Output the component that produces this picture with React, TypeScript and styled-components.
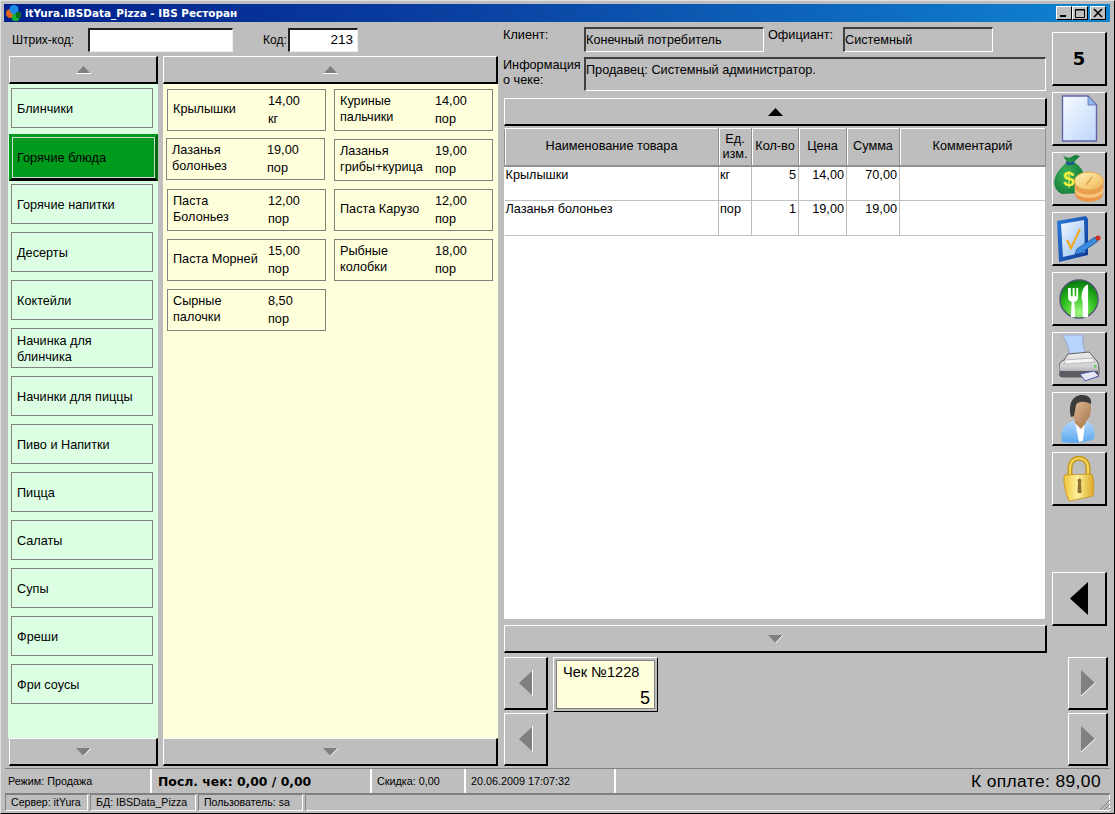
import React from "react";
import styled, { createGlobalStyle, css } from "styled-components";

const FACE = "#bebebe";

const Global = createGlobalStyle`
  html, body { margin: 0; padding: 0; background: ${FACE}; }
  body { font-family: "Liberation Sans", Arial, sans-serif; font-size: 12.7px; color: #000; }
  * { box-sizing: border-box; }
`;

const raised = css`
  border-style: solid;
  border-width: 1px 2px 2px 1px;
  border-color: #fff #000 #000 #fff;
  background: ${FACE};
`;
const sunken = css`
  border-style: solid;
  border-width: 2px 1px 1px 2px;
  border-color: #404040 #fff #fff #404040;
`;

const Window = styled.div`
  width: 1115px;
  height: 814px;
  background: ${FACE};
  display: flex;
  flex-direction: column;
  padding: 4px 2px 2px 4px;
  border: 1px solid;
  border-color: #e0e0e0 #000 #000 #e0e0e0;
  overflow: hidden;
`;
const TitleBar = styled.div`
  height: 18px;
  margin: -1px 2px 0 -1px;
  flex: none;
  display: flex;
  align-items: center;
  padding: 0 4px 0 2px;
  background: linear-gradient(90deg, #00208c 0%, #0a3fa0 40%, #1084d0 100%);
`;
const TitleText = styled.span`
  font-family: "DejaVu Sans", sans-serif;
  font-weight: 700;
  font-size: 10.45px;
  color: #fff;
  margin-left: 3px;
  flex: 1;
  white-space: nowrap;
`;
const WinButton = styled.div<{ $gap?: number }>`
  width: 16px;
  height: 14px;
  margin-left: ${(p) => p.$gap ?? 0}px;
  background: ${FACE};
  border: 1px solid;
  border-color: #fff #000 #000 #fff;
  display: flex;
  align-items: center;
  justify-content: center;
`;
const Main = styled.div`
  flex: 1;
  display: flex;
  min-height: 0;
`;
const LeftSide = styled.div`
  width: 490px;
  margin-left: 3px;
  display: flex;
  flex-direction: column;
`;
const TopRow = styled.div`
  height: 34px;
  display: flex;
  align-items: flex-start;
  padding-top: 6px;
`;
const BarLabel = styled.label<{ $w: number; $ml?: number }>`
  width: ${(p) => p.$w}px;
  margin-left: ${(p) => p.$ml ?? 0}px;
  font-size: 12px;
  line-height: 24px;
  flex: none;
`;
const Input = styled.div<{ $w: number }>`
  width: ${(p) => p.$w}px;
  height: 24px;
  flex: none;
  background: #fff;
  ${sunken}
  border-color: #202020 #eee #eee #202020;
  font-size: 13.5px;
  line-height: 19px;
  text-align: right;
  padding-right: 4px;
`;
const Panes = styled.div`
  flex: 1;
  display: flex;
  gap: 5px;
  min-height: 0;
`;
const Pane = styled.div<{ $w: number }>`
  width: ${(p) => p.$w}px;
  display: flex;
  flex-direction: column;
  margin-left: ${(p) => (p.$w < 200 ? 1 : 0)}px;
`;
const ScrollBtn = styled.div<{ $ml?: number }>`
  ${raised}
  height: 28px;
  margin-left: ${(p) => p.$ml ?? 0}px;
  flex: none;
  display: flex;
  align-items: center;
  justify-content: center;
`;
const CatList = styled.div`
  flex: 1;
  background: #dcffe4;
  margin-left: -1px;
  padding: 4px 0 0 3px;
  display: flex;
  flex-direction: column;
  gap: 8px;
`;
const Cat = styled.div<{ $on?: boolean }>`
  width: 142px;
  height: 40px;
  flex: none;
  border: 1px solid #808080;
  background: #dcffe4;
  display: flex;
  align-items: center;
  padding: 1px 0 0 5px;
  line-height: 16px;
  ${(p) =>
    p.$on &&
    css`
      width: 149px;
      height: 47px;
      margin: -2px 0 -5px -2px;
      background: #009b1c;
      border: 3px solid #009b1c;
      border-right-color: #006a10;
      border-bottom-color: #000;
      outline: 1px solid #d8d8d8;
      outline-offset: -4px;
      padding-left: 5px;
    `}
`;
const ProductPanel = styled.div`
  flex: 1;
  background: #ffffdc;
  padding: 5px 0 0 4px;
  display: grid;
  grid-template-columns: 159px 159px;
  grid-auto-rows: 42px;
  column-gap: 8px;
  row-gap: 8px;
  align-content: start;
`;
const Product = styled.div<{ $nudge?: boolean }>`
  border: 1px solid #808080;
  background: #ffffdc;
  display: grid;
  grid-template-columns: 95px 1fr;
  padding-left: 5px;
  ${(p) => p.$nudge && css`transform: translate(-1px, -1px);`}
`;
const ProductName = styled.div`
  align-self: center;
  line-height: 16px;
  margin-top: -2px;
`;
const ProductPrice = styled.div`
  line-height: 18px;
  padding-top: 2px;
`;
const Center = styled.div`
  width: 544px;
  margin-left: 5px;
  display: flex;
  flex-direction: column;
`;
const InfoLabel = styled.div<{ $w?: number; $ml?: number }>`
  width: ${(p) => p.$w ?? 81}px;
  margin-left: ${(p) => p.$ml ?? 0}px;
  line-height: 15px;
  padding-top: 1px;
  flex: none;
`;
const InfoRow = styled.div<{ $h: number; $pt: number }>`
  display: flex;
  height: ${(p) => p.$h}px;
  padding-top: ${(p) => p.$pt}px;
  flex: none;
`;
const InfoField = styled.div<{ $w: number; $h?: number }>`
  width: ${(p) => p.$w}px;
  height: ${(p) => p.$h ?? 25}px;
  ${sunken}
  flex: none;
  padding: 2px 0 0 0;
  line-height: 18px;
`;
const TableWrap = styled.div`
  width: 541px;
  height: 491px;
  margin: 2px 0 6px 1px;
  background: #fff;
  flex: none;
`;
const Table = styled.table`
  border-collapse: collapse;
  table-layout: fixed;
  width: 541px;
  font-size: 12.7px;
`;
const Th = styled.th`
  background: ${FACE};
  font-weight: 400;
  height: 37px;
  line-height: 15px;
  padding: 0;
  border: 1px solid #909090;
  border-top-color: #fff;
  border-bottom: 2px solid #909090;
  box-shadow: inset 1px 0 #fff;
`;
const Td = styled.td<{ $right?: boolean }>`
  height: 35px;
  vertical-align: top;
  padding: 0 2px 0 1px;
  border-right: 1px solid #bdbdbd;
  border-bottom: 1px solid #c0c0c0;
  text-align: ${(p) => (p.$right ? "right" : "left")};
  line-height: 16px;
`;
const ChecksRow = styled.div`
  display: flex;
  margin: 4px 0 0 1px;
  flex: 1;
`;
const NavColumn = styled.div<{ $w: number; $ml?: number }>`
  display: flex;
  flex-direction: column;
  gap: 3px;
  width: ${(p) => p.$w}px;
  margin-left: ${(p) => p.$ml ?? 0}px;
  flex: none;
`;
const NavBtn = styled.div`
  ${raised}
  height: 53px;
  display: flex;
  align-items: center;
  justify-content: center;
`;
const CheckCard = styled.div`
  width: 105px;
  height: 55px;
  margin-left: 5px;
  border: 1px solid;
  border-color: #fff #000 #000 #fff;
  background: ${FACE};
  padding: 2px;
`;
const CheckInner = styled.div`
  height: 100%;
  background: #ffffdc;
  border: 1px solid #808080;
  padding: 3px 4px 0 6px;
  font-size: 14.6px;
  display: flex;
  flex-direction: column;
  justify-content: space-between;
`;
const CheckCount = styled.div`
  text-align: right;
  font-size: 18px;
  line-height: 20px;
`;
const Right = styled.div`
  width: 55px;
  margin-left: 5px;
  padding-top: 10px;
  display: flex;
  flex-direction: column;
  gap: 6px;
`;
const ToolBtn = styled.div`
  ${raised}
  width: 55px;
  height: 54px;
  flex: none;
  display: flex;
  align-items: center;
  justify-content: center;
`;
const CountBtn = styled(ToolBtn)`
  font-weight: 700;
  font-size: 18px;
  font-family: "DejaVu Sans", sans-serif;
`;
const Spacer = styled.div<{ $h: number }>`
  height: ${(p) => p.$h}px;
  flex: none;
`;
const Status = styled.div<{ $h: number; $mt?: number }>`
  display: flex;
  height: ${(p) => p.$h}px;
  margin-top: ${(p) => p.$mt ?? 0}px;
  margin-right: 2px;
  gap: 2px;
  flex: none;
  position: relative;
  border-top: 1px solid #808080;
`;
const Cell = styled.div<{ $w?: number; $bold?: boolean; $big?: boolean }>`
  ${(p) => (p.$w ? `width:${p.$w}px;flex:none;` : "flex:1;")}
  border-right: 2px solid #fff;
  display: flex;
  align-items: center;
  padding-left: 3px;
  font-size: 10.8px;
  white-space: nowrap;
  ${(p) => p.$bold && css`font-weight: 700; font-size: 12.4px; padding-left: 4px; font-family: "DejaVu Sans", sans-serif;`}
  ${(p) => p.$big && css`border-right: 0; justify-content: flex-end; padding-right: 9px; font-size: 17.4px; letter-spacing: 0.4px;`}
`;
const BoxCell = styled.div<{ $w?: number }>`
  ${(p) => (p.$w ? `width:${p.$w}px;flex:none;` : "flex:1;")}
  border: 1px solid;
  border-color: #808080 #fff #fff #808080;
  font-size: 10.6px;
  line-height: 15px;
  padding-left: 5px;
  white-space: nowrap;
`;
const Grip = styled.svg`
  position: absolute;
  right: -1px;
  bottom: 0;
`;
const BlockSvg = styled.svg`
  display: block;
`;

type Dir = "up" | "down" | "left" | "right";
const Arrow = ({ dir, color = "#808080", size = 15, hi = true }: { dir: Dir; color?: string; size?: number; hi?: boolean }) => {
  const h = Math.round(size * 0.55);
  if (dir === "up" || dir === "down") {
    const pts = dir === "up" ? `0,${h} ${size / 2},0 ${size},${h}` : `0,0 ${size},0 ${size / 2},${h}`;
    return (
      <BlockSvg width={size} height={h}>
        <polygon points={pts} fill={color} />
        {hi && (dir === "up"
          ? <line x1="0" y1={h - 0.5} x2={size} y2={h - 0.5} stroke="#fff" />
          : <line x1={size} y1="0" x2={size / 2} y2={h} stroke="#fff" />)}
      </BlockSvg>
    );
  }
  const pts = dir === "left" ? `${h},0 ${h},${size} 0,${size / 2}` : `0,0 ${h},${size / 2} 0,${size}`;
  return (
    <BlockSvg width={h} height={size}>
      <polygon points={pts} fill={color} />
      {hi && (dir === "left"
        ? <line x1={h - 0.5} y1="0" x2={h - 0.5} y2={size} stroke="#fff" />
        : <line x1={h} y1={size / 2} x2="0" y2={size} stroke="#fff" />)}
    </BlockSvg>
  );
};

const AppLogo = () => (
  <svg width="16" height="16" viewBox="0 0 16 16">
    <circle cx="4.5" cy="8.5" r="4.5" fill="#e8641c" />
    <rect x="6" y="9" width="7" height="7" rx="2" fill="#18b030" />
    <circle cx="8" cy="4.5" r="4.5" fill="#1c8ce8" />
    <rect x="10" y="7" width="5" height="6" rx="1" fill="#0c7020" />
  </svg>
);

const DocIcon = () => (
  <svg width="37" height="47" viewBox="0 0 37 47">
    <defs>
      <linearGradient id="doc" x1="0" y1="0" x2="1" y2="1">
        <stop offset="0" stopColor="#f8fbff" />
        <stop offset="1" stopColor="#bcd6fc" />
      </linearGradient>
    </defs>
    <path d="M1.5 1 H27 L35.5 10 V46 H1.5 Z" fill="url(#doc)" stroke="#6464ac" strokeWidth="1.4" />
    <path d="M27 1 V10 H35.5 Z" fill="#8cb8f0" stroke="#6464ac" strokeWidth="0.8" />
  </svg>
);

const MoneyIcon = () => (
  <svg width="50" height="48" viewBox="0 0 50 48">
    <defs>
      <radialGradient id="bag" cx="0.4" cy="0.5" r="0.7">
        <stop offset="0" stopColor="#3cb45c" />
        <stop offset="1" stopColor="#0c7030" />
      </radialGradient>
      <linearGradient id="coin" x1="0" y1="0" x2="1" y2="1">
        <stop offset="0" stopColor="#fff4b8" />
        <stop offset="1" stopColor="#f0b454" />
      </linearGradient>
    </defs>
    <path d="M9 1 L15 3 L21 0 L26 1 L20 7 C26 11 30 16 31 24 L26 38 L8 39 C1 36 -1 29 1 23 C3 16 9 11 13 7 Z" fill="url(#bag)" />
    <path d="M12 6 Q16 9 20 6 L20 9 Q16 11 12 9 Z" fill="#2050a0" />
    <text x="9" y="31" fontFamily="Liberation Sans" fontWeight="700" fontSize="21" fill="#f4f040">$</text>
    <ellipse cx="35" cy="39" rx="14" ry="8" fill="#e89848" />
    <ellipse cx="35" cy="35" rx="14.5" ry="8" fill="#f8c47c" />
    <ellipse cx="35" cy="31.5" rx="14.5" ry="8" fill="#e8a050" />
    <ellipse cx="35" cy="26" rx="14.5" ry="9" fill="url(#coin)" stroke="#e8a848" />
    <path d="M32 30 L38 22" stroke="#e0a040" strokeWidth="1.3" />
  </svg>
);

const CheckIcon = () => (
  <svg width="46" height="46" viewBox="0 0 46 46">
    <defs>
      <linearGradient id="pad" x1="0" y1="0" x2="1" y2="1">
        <stop offset="0" stopColor="#2c7ce0" />
        <stop offset="1" stopColor="#0c3890" />
      </linearGradient>
      <linearGradient id="sheet" x1="0" y1="0" x2="1" y2="1">
        <stop offset="0" stopColor="#f4f8ff" />
        <stop offset="1" stopColor="#8cbcf4" />
      </linearGradient>
    </defs>
    <path d="M1 5 L30 0 L32 3 L32 39 L3 46 Z" fill="url(#pad)" />
    <path d="M5 8 L28 4 L29 36 L7 41 Z" fill="url(#sheet)" />
    <path d="M11 24 L15 32 L24 13" fill="none" stroke="#f0a820" strokeWidth="2.1" />
    <path d="M21 33 L39 21 L42 25 L25 37 L19 38 Z" fill="#3c8ce0" stroke="#1850a0" strokeWidth="0.8" />
    <circle cx="42" cy="22" r="2.6" fill="#d03020" />
  </svg>
);

const FoodIcon = () => (
  <svg width="40" height="42" viewBox="0 0 44 46">
    <defs>
      <radialGradient id="ball" cx="0.5" cy="0.85" r="0.8">
        <stop offset="0" stopColor="#a4f880" />
        <stop offset="0.55" stopColor="#30c020" />
        <stop offset="1" stopColor="#0c7c10" />
      </radialGradient>
    </defs>
    <circle cx="22" cy="23" r="21" fill="url(#ball)" stroke="#505078" strokeWidth="1.4" />
    <path d="M10 11 V21 Q10 25 14 26 L13 43 H18 L17 26 Q21 25 21 21 V11 H19 V20 H17.2 V11 H15 V20 H13 V11 Z" fill="#fff" />
    <path d="M26 43 V26 C23 20 26 8 32 7 V43 Z" fill="#fff" />
  </svg>
);

const PrinterIcon = () => (
  <svg width="41" height="47" viewBox="0 0 41 47">
    <defs>
      <linearGradient id="pbody" x1="0" y1="0" x2="0" y2="1">
        <stop offset="0" stopColor="#eeeeee" />
        <stop offset="0.6" stopColor="#d0d0d4" />
        <stop offset="1" stopColor="#84848c" />
      </linearGradient>
    </defs>
    <path d="M3 0 L24 0 C23 8 25 14 27 20 L11 22 C10 14 8 6 3 0 Z" fill="#b8d4fc" stroke="#7890c8" strokeWidth="0.6" />
    <path d="M9 19 L30 17 L38 26 Q40 29 40 34 V39 Q40 42 37 42 H4 Q0 42 0 39 V32 Q0 27 5 25 Z" fill="url(#pbody)" stroke="#606068" strokeWidth="1" />
    <path d="M6 25 L34 23 L36 27 L5 29 Z" fill="#f6f6f6" stroke="#9c9ca0" strokeWidth="0.6" />
    <path d="M1 36 H39 V40 Q39 42 37 42 H4 Q1 42 1 40 Z" fill="#5c5c64" />
    <path d="M21 39 L35 36 L40 41 L26 46 Z" fill="#e6e8f6" stroke="#5058a8" strokeWidth="1" />
    <rect x="35" y="30" width="2.5" height="2.5" fill="#60d050" />
  </svg>
);

const UserIcon = () => (
  <svg width="36" height="48" viewBox="0 0 36 48">
    <defs>
      <linearGradient id="skin" x1="0" y1="0" x2="1" y2="1">
        <stop offset="0" stopColor="#ecc8a4" />
        <stop offset="1" stopColor="#a87850" />
      </linearGradient>
      <linearGradient id="shirt" x1="0" y1="0" x2="0" y2="1">
        <stop offset="0" stopColor="#b0d8fc" />
        <stop offset="1" stopColor="#5ca8f0" />
      </linearGradient>
    </defs>
    <path d="M1 47 C-1 35 3 29 12 26 L24 26 C32 28 35 34 33 44 Q18 50 1 47 Z" fill="url(#shirt)" />
    <path d="M14 27 L24 27 L22 46 L18 47 Z" fill="#fff" />
    <path d="M13 18 H25 V28 L20 34 L14 28 Z" fill="#b88858" />
    <ellipse cx="20" cy="14" rx="10" ry="14" fill="url(#skin)" />
    <path d="M10 22 C7 10 11 0 21 0 C27 0 31 3 30 9 C24 6 17 6 15 10 L13 21 Z" fill="#3c3c3c" />
  </svg>
);

const LockIcon = () => (
  <svg width="32" height="46" viewBox="0 0 32 46">
    <defs>
      <linearGradient id="gold" x1="0" y1="0" x2="1" y2="0">
        <stop offset="0" stopColor="#f0c438" />
        <stop offset="0.45" stopColor="#fff29c" />
        <stop offset="1" stopColor="#dca824" />
      </linearGradient>
    </defs>
    <path d="M7 20 V12 C7 -1 25 -1 25 12 V20" fill="none" stroke="#c89818" strokeWidth="5" />
    <path d="M7 20 V12 C7 -1 25 -1 25 12 V20" fill="none" stroke="#f4d860" strokeWidth="2" />
    <path d="M1 19 L29 18 Q32 26 30 40 L6 45 Q0 32 1 19 Z" fill="url(#gold)" stroke="#c89020" strokeWidth="0.8" />
    <path d="M15 26 a2 2 0 1 1 3 0 L18.5 37 H14.5 Z" fill="#8c7030" />
  </svg>
);

const categories = ["Блинчики", "Горячие блюда", "Горячие напитки", "Десерты", "Коктейли", "Начинка для блинчика", "Начинки для пиццы", "Пиво и Напитки", "Пицца", "Салаты", "Супы", "Фреши", "Фри соусы"];
const products: { n: React.ReactNode; p: string; u: string; nudge?: boolean }[] = [
  { n: "Крылышки", p: "14,00", u: "кг" },
  { n: <>Куриные<br />пальчики</>, p: "14,00", u: "пор" },
  { n: <>Лазанья<br />болоньез</>, p: "19,00", u: "пор", nudge: true },
  { n: <>Лазанья<br />грибы+курица</>, p: "19,00", u: "пор" },
  { n: <>Паста<br />Болоньез</>, p: "12,00", u: "пор" },
  { n: "Паста Карузо", p: "12,00", u: "пор" },
  { n: "Паста Морней", p: "15,00", u: "пор" },
  { n: <>Рыбные<br />колобки</>, p: "18,00", u: "пор" },
  { n: <>Сырные<br />палочки</>, p: "8,50", u: "пор" },
];
const rows = [
  ["Крылышки", "кг", "5", "14,00", "70,00"],
  ["Лазанья болоньез", "пор", "1", "19,00", "19,00"],
];

export default function App() {
  return (
    <Window>
      <Global />
      <TitleBar>
        <AppLogo />
        <TitleText>itYura.IBSData_Pizza - IBS Ресторан</TitleText>
        <WinButton>
          <svg width="10" height="10"><rect x="1" y="7" width="6" height="2" /></svg>
        </WinButton>
        <WinButton>
          <svg width="10" height="10"><path d="M0.5 1.5 H9.5 V9.5 H0.5 Z M0.5 2 H9.5" fill="none" stroke="#000" /></svg>
        </WinButton>
        <WinButton $gap={2}>
          <svg width="10" height="10"><path d="M1 1 L9 9 M9 1 L1 9" stroke="#000" strokeWidth="1.6" /></svg>
        </WinButton>
      </TitleBar>
      <Main>
        <LeftSide>
          <TopRow>
            <BarLabel $w={76} $ml={4}>Штрих-код:</BarLabel>
            <Input $w={145} />
            <BarLabel $w={25} $ml={30}>Код:</BarLabel>
            <Input $w={70}>213</Input>
          </TopRow>
          <Panes>
            <Pane $w={149}>
              <ScrollBtn><Arrow dir="up" /></ScrollBtn>
              <CatList>
                {categories.map((c) => (
                  <Cat key={c} $on={c === "Горячие блюда"}>{c === "Начинка для блинчика" ? <span>Начинка для<br />блинчика</span> : c}</Cat>
                ))}
              </CatList>
              <ScrollBtn><Arrow dir="down" /></ScrollBtn>
            </Pane>
            <Pane $w={335}>
              <ScrollBtn><Arrow dir="up" /></ScrollBtn>
              <ProductPanel>
                {products.map((p, i) => (
                  <Product key={i} $nudge={p.nudge}>
                    <ProductName>{p.n}</ProductName>
                    <ProductPrice>{p.p}<br />{p.u}</ProductPrice>
                  </Product>
                ))}
              </ProductPanel>
              <ScrollBtn><Arrow dir="down" /></ScrollBtn>
            </Pane>
          </Panes>
        </LeftSide>
        <Center>
          <InfoRow $h={30} $pt={5}>
            <InfoLabel>Клиент:</InfoLabel>
            <InfoField $w={180}>Конечный потребитель</InfoField>
            <InfoLabel $w={75} $ml={4}>Официант:</InfoLabel>
            <InfoField $w={150}>Системный</InfoField>
          </InfoRow>
          <InfoRow $h={46} $pt={5}>
            <InfoLabel>Информация<br />о чеке:</InfoLabel>
            <InfoField $w={462} $h={34}>Продавец: Системный администратор.</InfoField>
          </InfoRow>
          <ScrollBtn $ml={1}><Arrow dir="up" color="#000" hi={false} /></ScrollBtn>
          <TableWrap>
            <Table>
              <colgroup>
                <col width={214} /><col width={33} /><col width={47} /><col width={48} /><col width={53} /><col width={146} />
              </colgroup>
              <thead>
                <tr>
                  <Th>Наименование товара</Th>
                  <Th>Ед.<br />изм.</Th>
                  <Th>Кол-во</Th>
                  <Th>Цена</Th>
                  <Th>Сумма</Th>
                  <Th>Комментарий</Th>
                </tr>
              </thead>
              <tbody>
                {rows.map((r) => (
                  <tr key={r[0]}>
                    <Td>{r[0]}</Td>
                    <Td>{r[1]}</Td>
                    <Td $right>{r[2]}</Td>
                    <Td $right>{r[3]}</Td>
                    <Td $right>{r[4]}</Td>
                    <Td />
                  </tr>
                ))}
              </tbody>
            </Table>
          </TableWrap>
          <ScrollBtn $ml={1}><Arrow dir="down" /></ScrollBtn>
          <ChecksRow>
            <NavColumn $w={44}>
              <NavBtn><Arrow dir="left" size={26} /></NavBtn>
              <NavBtn><Arrow dir="left" size={26} /></NavBtn>
            </NavColumn>
            <CheckCard>
              <CheckInner>
                <div>Чек №1228</div>
                <CheckCount>5</CheckCount>
              </CheckInner>
            </CheckCard>
          </ChecksRow>
        </Center>
        <Right>
          <CountBtn>5</CountBtn>
          <ToolBtn><DocIcon /></ToolBtn>
          <ToolBtn><MoneyIcon /></ToolBtn>
          <ToolBtn><CheckIcon /></ToolBtn>
          <ToolBtn><FoodIcon /></ToolBtn>
          <ToolBtn><PrinterIcon /></ToolBtn>
          <ToolBtn><UserIcon /></ToolBtn>
          <ToolBtn><LockIcon /></ToolBtn>
          <Spacer $h={54} />
          <ToolBtn><Arrow dir="left" color="#000" size={33} hi={false} /></ToolBtn>
          <Spacer $h={19} />
          <NavColumn $w={40} $ml={16}>
            <NavBtn><Arrow dir="right" size={26} /></NavBtn>
            <NavBtn><Arrow dir="right" size={26} /></NavBtn>
          </NavColumn>
        </Right>
      </Main>
      <Status $h={25} $mt={2}>
        <Cell $w={147}>Режим: Продажа</Cell>
        <Cell $w={218} $bold>Посл. чек: 0,00 / 0,00</Cell>
        <Cell $w={92}>Скидка: 0,00</Cell>
        <Cell $w={148}>20.06.2009 17:07:32</Cell>
        <Cell $big>К оплате: 89,00</Cell>
      </Status>
      <Status $h={18}>
        <BoxCell $w={83}>Сервер: itYura</BoxCell>
        <BoxCell $w={106}>БД: IBSData_Pizza</BoxCell>
        <BoxCell $w={105}>Пользователь: sa</BoxCell>
        <BoxCell />
        <Grip width="12" height="12"><path d="M11 1 L1 11 M11 5 L5 11 M11 9 L9 11" stroke="#808080" /></Grip>
      </Status>
    </Window>
  );
}
